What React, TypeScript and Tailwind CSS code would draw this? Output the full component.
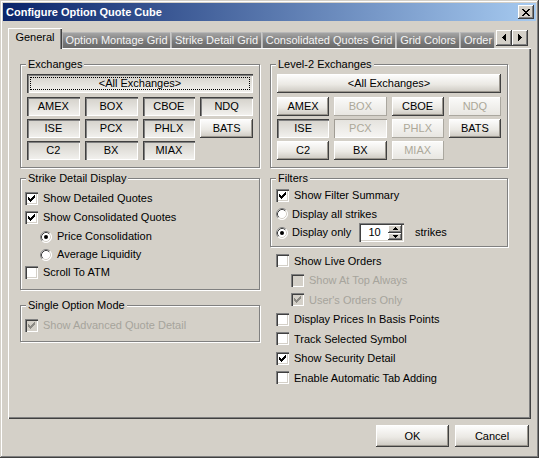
import React from 'react';

const raised =
  'bg-[linear-gradient(#fefefe,#ebe9e4_55%,#c9c5bd)] shadow-[inset_-1px_-1px_0_#404040,inset_1px_1px_0_#ffffff,inset_-2px_-2px_0_#9a968e]';
const sunken =
  'shadow-[inset_1px_1px_0_#808080,inset_2px_2px_0_#404040,inset_-1px_-1px_0_#ffffff,inset_-2px_-2px_0_#d4d0c8]';
const classic =
  'bg-[#d4d0c8] shadow-[inset_-1px_-1px_0_#404040,inset_1px_1px_0_#ffffff,inset_-2px_-2px_0_#808080,inset_2px_2px_0_#d4d0c8]';

function Check({ checked = false, disabled = false }: { checked?: boolean; disabled?: boolean }) {
  return (
    <span className={`relative block w-[13px] h-[13px] shrink-0 ${disabled ? 'bg-[#d4d0c8]' : 'bg-white'} ${sunken}`}>
      {checked && (
        <svg width="13" height="13" viewBox="0 0 13 13" className="absolute left-0 top-0" shapeRendering="crispEdges">
          <path
            d="M3 5h1v3H3zM4 6h1v3H4zM5 7h1v3H5zM6 6h1v3H6zM7 5h1v3H7zM8 4h1v3H8zM9 3h1v3H9z"
            fill={disabled ? '#8c8a84' : '#000000'}
          />
        </svg>
      )}
    </span>
  );
}

function Radio({ checked = false }: { checked?: boolean }) {
  return (
    <svg width="12" height="12" viewBox="0 0 12 12" className="shrink-0">
      <circle cx="6" cy="6" r="5.5" fill="#ffffff" />
      <path d="M2.11 9.89A5.5 5.5 0 0 1 9.89 2.11" stroke="#808080" fill="none" />
      <path d="M9.89 2.11A5.5 5.5 0 0 1 2.11 9.89" stroke="#ffffff" fill="none" />
      <path d="M2.82 9.18A4.5 4.5 0 0 1 9.18 2.82" stroke="#404040" fill="none" />
      <path d="M9.18 2.82A4.5 4.5 0 0 1 2.82 9.18" stroke="#d4d0c8" fill="none" />
      {checked && <circle cx="6" cy="6" r="2" fill="#000000" />}
    </svg>
  );
}

function CheckRow({
  label,
  checked,
  disabled,
  className = '',
}: {
  label: string;
  checked?: boolean;
  disabled?: boolean;
  className?: string;
}) {
  return (
    <div className={`flex items-center gap-[5px] ${className}`}>
      <Check checked={checked} disabled={disabled} />
      <span className={disabled ? 'text-[#a6a49c]' : ''}>{label}</span>
    </div>
  );
}

function RadioRow({ label, checked, className = '' }: { label: string; checked?: boolean; className?: string }) {
  return (
    <div className={`flex items-center gap-[5px] ${className}`}>
      <Radio checked={checked} />
      <span>{label}</span>
    </div>
  );
}

function ExButton({
  label,
  down = false,
  disabled = false,
  focus = false,
}: {
  label: string;
  down?: boolean;
  disabled?: boolean;
  focus?: boolean;
}) {
  let look = raised;
  if (down && !disabled)
    look =
      'bg-[linear-gradient(#d3d0c9,#f3f2ef)] shadow-[inset_1px_1px_0_#404040,inset_2px_2px_0_#808080,inset_-1px_-1px_0_#ffffff]';
  else if (down && disabled)
    look = 'bg-[linear-gradient(#e4e2dd,#f7f6f4)] shadow-[inset_1px_1px_0_#a09c94,inset_-1px_-1px_0_#ffffff]';
  else if (disabled)
    look = 'bg-[linear-gradient(#fbfbfa,#e7e5e0)] shadow-[inset_-1px_-1px_0_#aaa79f,inset_1px_1px_0_#ffffff]';
  return (
    <div
      className={`relative h-[19px] flex items-center justify-center ${look} ${
        disabled ? 'text-[#aca899]' : 'text-black'
      }`}
    >
      {focus && <span className="absolute inset-[3px] border border-dotted border-black" />}
      <span className="relative">{label}</span>
    </div>
  );
}

function Group({ title, className = '', children }: { title: string; className?: string; children: React.ReactNode }) {
  return (
    <div className={`relative border border-[#808080] shadow-[inset_1px_1px_0_#ffffff,1px_1px_0_#ffffff] ${className}`}>
      <span className="absolute -top-[7px] left-[5px] bg-[#d4d0c8] px-[2px] leading-[13px]">{title}</span>
      {children}
    </div>
  );
}

function ExchangeGroup({
  title,
  items,
  focusAll,
}: {
  title: string;
  items: { label: string; down?: boolean; disabled?: boolean }[];
  focusAll?: boolean;
}) {
  return (
    <Group title={title} className="pt-[9px] pb-[7px] px-[6px]">
      <ExButton label="<All Exchanges>" down={focusAll} focus={focusAll} />
      <div className="grid grid-cols-4 gap-x-[5px] gap-y-[3px] mt-[4px]">
        {items.map((it) => (
          <ExButton key={it.label} {...it} />
        ))}
      </div>
    </Group>
  );
}

const leftExchanges = [
  { label: 'AMEX', down: true },
  { label: 'BOX', down: true },
  { label: 'CBOE', down: true },
  { label: 'NDQ', down: true },
  { label: 'ISE', down: true },
  { label: 'PCX', down: true },
  { label: 'PHLX', down: true },
  { label: 'BATS' },
  { label: 'C2', down: true },
  { label: 'BX', down: true },
  { label: 'MIAX', down: true },
];

const level2Exchanges = [
  { label: 'AMEX' },
  { label: 'BOX', disabled: true },
  { label: 'CBOE' },
  { label: 'NDQ', disabled: true },
  { label: 'ISE', down: true },
  { label: 'PCX', down: true, disabled: true },
  { label: 'PHLX', disabled: true },
  { label: 'BATS' },
  { label: 'C2' },
  { label: 'BX' },
  { label: 'MIAX', disabled: true },
];

const tabs = [
  { label: 'Option Montage Grid', w: 'w-[109px] justify-center' },
  { label: 'Strike Detail Grid', w: 'w-[91px] justify-center' },
  { label: 'Consolidated Quotes Grid', w: 'w-[134px] justify-center' },
  { label: 'Grid Colors', w: 'w-[64px] justify-center' },
  { label: 'Order', w: 'w-[35px] pl-[4px]' },
];

function SpinBox() {
  return (
    <div className={`w-[45px] h-[19px] bg-white flex ${sunken}`}>
      <span className="flex-1 flex items-center justify-center pl-[2px]">10</span>
      <div className="w-[14px] my-[2px] mr-[2px] flex flex-col">
        <div className={`flex-1 flex items-center justify-center ${classic}`}>
          <svg width="5" height="3" viewBox="0 0 5 3" shapeRendering="crispEdges">
            <path d="M2 0h1v1H2zM1 1h3v1H1zM0 2h5v1H0z" fill="#000" />
          </svg>
        </div>
        <div className={`flex-1 flex items-center justify-center ${classic}`}>
          <svg width="5" height="3" viewBox="0 0 5 3" shapeRendering="crispEdges">
            <path d="M0 0h5v1H0zM1 1h3v1H1zM2 2h1v1H2z" fill="#000" />
          </svg>
        </div>
      </div>
    </div>
  );
}

export default function App() {
  return (
    <div
      className={`w-[539px] h-[458px] bg-[#d4d0c8] p-[3px] flex flex-col text-[11px] text-black font-['Liberation_Sans',Arial,sans-serif] shadow-[inset_-1px_-1px_0_#404040,inset_1px_1px_0_#d4d0c8,inset_-2px_-2px_0_#808080,inset_2px_2px_0_#ffffff]`}
    >
      {/* title bar */}
      <div className="h-[18px] flex items-center bg-[linear-gradient(90deg,#0a246a,#a6caf0)] pl-[3px] pr-[2px]">
        <span className="flex-1 text-white font-bold text-[11px]">Configure Option Quote Cube</span>
        <div className={`w-[16px] h-[14px] flex items-center justify-center ${classic}`}>
          <svg width="8" height="7" viewBox="0 0 8 7" shapeRendering="crispEdges">
            <path
              d="M0 0h2v1H0zM6 0h2v1H6zM1 1h2v1H1zM5 1h2v1H5zM2 2h4v1H2zM3 3h2v1H3zM2 4h4v1H2zM1 5h2v1H1zM5 5h2v1H5zM0 6h2v1H0zM6 6h2v1H6z"
              fill="#000"
            />
          </svg>
        </div>
      </div>

      <div className="flex flex-col px-[5px] pt-[7px]">
        {/* tab strip */}
        <div className="h-[20px] flex items-end relative z-10">
          <div className="h-[21px] -mb-px w-[54px] shrink-0 bg-[#d4d0c8] flex items-center justify-center pb-[2px] shadow-[inset_1px_1px_0_#ffffff,inset_-1px_0_0_#404040,inset_-2px_0_0_#808080]">
            General
          </div>
          <div className="flex-1 flex items-end overflow-hidden h-[20px]">
            {tabs.map((t) => (
              <div
                key={t.label}
                className={`${t.w} shrink-0 h-[16px] flex items-center whitespace-nowrap text-[#f4f4f4] bg-[linear-gradient(#a9a9a9,#7a7a7a_60%,#6a6a6a)] shadow-[inset_-1px_0_0_#c8c8c8,inset_1px_1px_0_#b8b8b8]`}
              >
                {t.label}
              </div>
            ))}
          </div>
          <div className="flex self-start mt-[2px] mr-[3px]">
            <div className={`w-[16px] h-[16px] flex items-center justify-center ${classic}`}>
              <svg width="16" height="16" viewBox="0 0 16 16" shapeRendering="crispEdges">
                <path d="M6 7h1v1H6zM7 6h1v3H7zM8 5h1v5H8zM9 4h1v7H9z" fill="#000" />
              </svg>
            </div>
            <div className={`w-[16px] h-[16px] flex items-center justify-center ${classic}`}>
              <svg width="16" height="16" viewBox="0 0 16 16" shapeRendering="crispEdges">
                <path d="M6 4h1v7H6zM7 5h1v5H7zM8 6h1v3H8zM9 7h1v1H9z" fill="#000" />
              </svg>
            </div>
          </div>
        </div>

        {/* tab panel */}
        <div className="h-[371px] flex gap-[10px] pl-[12px] pt-[16px] shadow-[inset_1px_1px_0_#ffffff,inset_-1px_-1px_0_#404040,inset_-2px_-2px_0_#808080]">
          <div className="w-[240px] flex flex-col">
            <ExchangeGroup title="Exchanges" items={leftExchanges} focusAll />

            <Group title="Strike Detail Display" className="mt-[10px] pt-[10px] pb-[7px] pl-[4px]">
              <CheckRow label="Show Detailed Quotes" checked className="h-[19px]" />
              <CheckRow label="Show Consolidated Quotes" checked className="h-[19px]" />
              <RadioRow label="Price Consolidation" checked className="h-[19px] pl-[15px]" />
              <RadioRow label="Average Liquidity" className="h-[17px] pl-[15px]" />
              <CheckRow label="Scroll To ATM" className="h-[19px]" />
            </Group>

            <Group title="Single Option Mode" className="mt-[15px] pt-[10px] pb-[6px] pl-[4px]">
              <CheckRow label="Show Advanced Quote Detail" checked disabled className="h-[19px]" />
            </Group>
          </div>

          <div className="w-[238px] flex flex-col">
            <ExchangeGroup title="Level-2 Exchanges" items={level2Exchanges} />

            <Group title="Filters" className="mt-[10px] pt-[7px] pb-[4px] pl-[5px]">
              <CheckRow label="Show Filter Summary" checked className="h-[19px]" />
              <div className="h-[18px] flex items-center gap-[4px]">
                <Radio />
                <span>Display all strikes</span>
              </div>
              <div className="h-[19px] flex items-center gap-[4px]">
                <Radio checked />
                <span className="w-[63px]">Display only</span>
                <SpinBox />
                <span className="ml-[7px]">strikes</span>
              </div>
            </Group>

            <div className="mt-[4px] pl-[6px] flex flex-col">
              <CheckRow label="Show Live Orders" className="h-[19.5px]" />
              <CheckRow label="Show At Top Always" disabled className="h-[19.5px] pl-[15px]" />
              <CheckRow label="User's Orders Only" checked disabled className="h-[19.5px] pl-[15px]" />
              <CheckRow label="Display Prices In Basis Points" className="h-[19.5px]" />
              <CheckRow label="Track Selected Symbol" className="h-[19.5px]" />
              <CheckRow label="Show Security Detail" checked className="h-[19.5px]" />
              <CheckRow label="Enable Automatic Tab Adding" className="h-[19.5px]" />
            </div>
          </div>
        </div>
      </div>

      {/* dialog buttons */}
      <div className="flex justify-end gap-[6px] mt-[6px] mr-[7px]">
        <button className={`w-[73px] h-[22px] flex items-center justify-center ${raised}`}>OK</button>
        <button className={`w-[74px] h-[22px] flex items-center justify-center ${raised}`}>Cancel</button>
      </div>
    </div>
  );
}
